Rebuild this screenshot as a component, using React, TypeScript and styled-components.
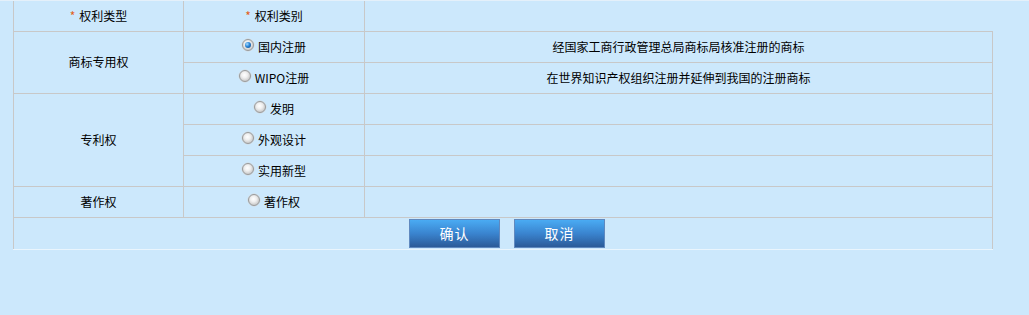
import styled, { createGlobalStyle } from "styled-components";

const GlobalStyle = createGlobalStyle`
    html, body {
        margin: 0;
        padding: 0;
        background: #cce8fc;
    }
    body {
        border-top: 1px solid #e4f0fa;
        font-family: "Noto Sans CJK SC", "Liberation Sans", sans-serif;
        font-size: 12px;
        color: #000;
    }
`;

type Choice = { label: string; checked?: boolean; desc?: string };
type Group = { name: string; choices: Choice[] };

const groups: Group[] = [
    {
        name: "商标专用权",
        choices: [
            { label: "国内注册", checked: true, desc: "经国家工商行政管理总局商标局核准注册的商标" },
            { label: "WIPO注册", desc: "在世界知识产权组织注册并延伸到我国的注册商标" },
        ],
    },
    {
        name: "专利权",
        choices: [{ label: "发明" }, { label: "外观设计" }, { label: "实用新型" }],
    },
    {
        name: "著作权",
        choices: [{ label: "著作权" }],
    },
];

const App = () => {
    return (
        <Page>
            <GlobalStyle />
            <Table>
                <colgroup>
                    <col style={{ width: 170 }} />
                    <col style={{ width: 181 }} />
                    <col />
                </colgroup>
                <tbody>
                    <HeadRow>
                        <Cell>
                            <Star>*</Star>权利类型
                        </Cell>
                        <Cell>
                            <Star>*</Star>权利类别
                        </Cell>
                        <LastHeadCell />
                    </HeadRow>
                    {groups.map((g) =>
                        g.choices.map((c, i) => (
                            <Row key={g.name + c.label}>
                                {i === 0 && <Cell rowSpan={g.choices.length}>{g.name}</Cell>}
                                <Cell>
                                    <RadioLabel>
                                        <Radio $checked={!!c.checked} />
                                        {c.label}
                                    </RadioLabel>
                                </Cell>
                                <Cell>{c.desc}</Cell>
                            </Row>
                        ))
                    )}
                    <ButtonRow>
                        <ButtonCell colSpan={3}>
                            <ButtonBar>
                                <Button>确认</Button>
                                <Button>取消</Button>
                            </ButtonBar>
                        </ButtonCell>
                    </ButtonRow>
                </tbody>
            </Table>
        </Page>
    );
};

export default App;

const Page = styled.div`
    width: 1029px;
    height: 314px;
    padding-left: 13px;
    box-sizing: border-box;
`;

const Table = styled.table`
    width: 980px;
    border-collapse: collapse;
    table-layout: fixed;
`;

const HeadRow = styled.tr`
    height: 30px;
`;

const Row = styled.tr`
    height: 31px;
`;

const Cell = styled.td`
    border: 1px solid #c8c8c8;
    border-top: none;
    padding: 0;
    text-align: center;
    vertical-align: middle;
    line-height: 14px;
    white-space: nowrap;
`;

const LastHeadCell = styled(Cell)`
    border-right: none;
`;

const Star = styled.span`
    color: #e2601a;
    margin-right: 4px;
    font-size: 12px;
`;

const RadioLabel = styled.span`
    display: inline-flex;
    align-items: center;
    gap: 4px;
`;

const Radio = styled.span<{ $checked: boolean }>`
    position: relative;
    display: inline-block;
    width: 12px;
    height: 12px;
    margin-bottom: 3px;
    border-radius: 50%;
    border: 1px solid #9a9a9a;
    box-sizing: border-box;
    background: radial-gradient(circle at 45% 40%, #ffffff 0%, #f0f0f0 35%, #c4c4c4 80%, #a8a8a8 100%);
    box-shadow: 0 0 0 0.5px #d8d8d8;

    &::after {
        content: "";
        display: ${(p) => (p.$checked ? "block" : "none")};
        position: absolute;
        left: 2px;
        top: 2px;
        width: 6px;
        height: 6px;
        border-radius: 50%;
        background: radial-gradient(circle at 35% 35%, #a8dcff 0%, #2a86d8 45%, #0b3f7a 100%);
    }
`;

const ButtonRow = styled.tr`
    height: 32px;
`;

const ButtonCell = styled.td`
    padding: 1px 0 0 8px;
    border-left: 1px solid #c8c8c8;
    border-right: 1px solid #c8c8c8;
    border-bottom: 1px solid #eaf5fd;
    vertical-align: top;
`;

const ButtonBar = styled.div`
    display: flex;
    justify-content: center;
    gap: 14px;
`;

const Button = styled.div`
    width: 91px;
    height: 29px;
    box-sizing: border-box;
    border: 1px solid #6089bf;
    background: linear-gradient(to bottom, #4aabf3 0%, #3a84cf 50%, #2b5a98 100%);
    color: #fff;
    font-size: 14px;
    letter-spacing: 1px;
    display: flex;
    align-items: center;
    justify-content: center;
    cursor: pointer;
`;
